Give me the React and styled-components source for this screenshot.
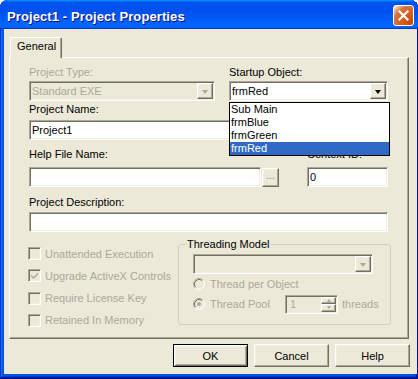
import React from 'react';
import styled, { createGlobalStyle, css } from 'styled-components';

const face = '#ece9d8';
const shadow = '#aca899';
const dkShadow = '#716f64';
const light = '#f1efe2';
const grayText = '#aca899';

const GlobalStyle = createGlobalStyle`
  html, body {
    margin: 0;
    padding: 0;
    background: #ffffff;
  }
  body {
    font-family: "Liberation Sans", Arial, sans-serif;
    font-size: 11px;
    color: #000;
  }
  * {
    box-sizing: border-box;
  }
`;

const sunken = css`
  border: 1px solid;
  border-color: ${shadow} #fff #fff ${shadow};
  box-shadow: inset 1px 1px 0 ${dkShadow}, inset -1px -1px 0 ${light};
`;

const raised = css`
  border: 1px solid;
  border-color: #fff ${dkShadow} ${dkShadow} #fff;
  box-shadow: inset -1px -1px 0 ${shadow}, inset 1px 1px 0 ${light};
`;

const Window = styled.div`
  width: 418px;
  height: 379px;
  display: flex;
  flex-direction: column;
  border-radius: 8px 8px 0 0;
  overflow: hidden;
  background: #0054e3;
  box-shadow: inset -1px -1px #00138c, inset 1px 1px #0831d9,
    inset -2px -2px #001ea0, inset 2px 2px #166aee,
    inset -3px -3px #003bda, inset 3px 3px #0855dd;
`;

const TitleBar = styled.div`
  height: 29px;
  flex: none;
  display: flex;
  align-items: center;
  padding: 0 4px 0 7px;
  background: linear-gradient(180deg, #0997ff 0%, #0053ee 8%, #0050ee 40%, #0066ff 88%, #0066ff 93%, #005bff 95%, #003dd7 96%, #003dd7 100%);
`;

const Title = styled.div`
  flex: 1;
  padding-top: 4px;
  color: #fff;
  font-size: 13px;
  line-height: 15px;
  font-weight: bold;
  letter-spacing: 0.1px;
  text-shadow: 1px 1px #0f1089;
`;

const CloseButton = styled.div`
  width: 21px;
  height: 21px;
  margin-top: 2px;
  border: 1px solid #fff;
  border-radius: 3px;
  display: flex;
  align-items: center;
  justify-content: center;
  background: radial-gradient(circle at 90% 90%, #cc4600 0%, #dc6527 55%, #cd7546 70%, #ffccb2 90%, #fff 100%);
`;

const Frame = styled.div`
  flex: 1;
  display: flex;
  padding: 0 4px 5px 4px;
`;

const Body = styled.div`
  flex: 1;
  display: flex;
  flex-direction: column;
  background: ${face};
  padding: 8px 8px 7px 5px;
`;

const TabStrip = styled.div`
  height: 20px;
  display: flex;
  align-items: flex-end;
  padding-left: 1px;
`;

const Tab = styled.div`
  position: relative;
  z-index: 1;
  width: 52px;
  height: 21px;
  margin-bottom: -1px;
  padding: 2px 0 0 6px;
  line-height: 13px;
  background: ${face};
  border-left: 1px solid #fff;
  border-top: 1px solid #fff;
  border-right: 1px solid ${dkShadow};
  border-top-left-radius: 2px;
  border-top-right-radius: 2px;
  box-shadow: inset -1px 0 0 ${shadow};
`;

const Panel = styled.div`
  height: 282px;
  border: 1px solid;
  border-color: #fff ${dkShadow} ${dkShadow} #fff;
  box-shadow: inset -1px -1px 0 ${shadow};
  padding: 8px 17px 0 19px;
  display: flex;
  flex-direction: column;
`;

const Row = styled.div`
  display: flex;
  align-items: flex-end;
  gap: ${p => p.$gap || 0}px;
  margin-top: ${p => p.$top || 0}px;
`;

const Field = styled.div`
  position: relative;
  display: flex;
  flex-direction: column;
  width: ${p => p.$width}px;
  margin-left: ${p => p.$left || 0}px;
`;

const Label = styled.div`
  height: 13px;
  line-height: 13px;
  white-space: nowrap;
  color: ${p => (p.$disabled ? grayText : '#000')};
  margin-bottom: ${p => p.$gap || 2}px;
`;

const TextBox = styled.div`
  ${sunken};
  height: ${p => p.$height || 20}px;
  width: ${p => (p.$width ? `${p.$width}px` : '100%')};
  background: ${p => (p.$disabled ? face : '#fff')};
  color: ${p => (p.$disabled ? grayText : '#000')};
  padding: 0 0 0 2px;
  display: flex;
  align-items: center;
  white-space: nowrap;
  overflow: hidden;
`;

const ComboBox = styled.div`
  ${sunken};
  height: ${p => p.$height || 20}px;
  width: 100%;
  background: ${p => (p.$disabled ? face : '#fff')};
  color: ${p => (p.$disabled ? grayText : '#000')};
  display: flex;
  align-items: stretch;
  padding: 1px;
`;

const ComboText = styled.div`
  flex: 1;
  padding-left: 1px;
  display: flex;
  align-items: center;
  white-space: nowrap;
`;

const DropButton = styled.div`
  ${raised};
  width: 16px;
  background: ${face};
  display: flex;
  align-items: center;
  justify-content: center;
`;

const Arrow = styled.div`
  width: 0;
  height: 0;
  border-left: 3.5px solid transparent;
  border-right: 3.5px solid transparent;
  border-top: 4px solid ${p => (p.$disabled ? grayText : '#000')};
  margin-top: 1px;
`;

const DropList = styled.div`
  position: absolute;
  z-index: 5;
  top: calc(100% + 1px);
  left: 0;
  width: 161px;
  border: 1px solid #000;
  background: #fff;
`;

const ListItem = styled.div`
  height: 13px;
  line-height: 13px;
  padding-left: 1px;
  background: ${p => (p.$selected ? '#316ac5' : '#fff')};
  color: ${p => (p.$selected ? '#fff' : '#000')};
`;

const SmallButton = styled.div`
  ${raised};
  width: 17px;
  height: 19px;
  margin-left: 1px;
  background: ${face};
  color: #8d8a7e;
  font-size: 11px;
  line-height: 12px;
  display: flex;
  justify-content: center;
  letter-spacing: 0px;
`;

const Lower = styled.div`
  display: flex;
  margin-top: 6px;
`;

const Checks = styled.div`
  width: 149px;
  margin-left: -1px;
  margin-right: 1px;
  padding-top: 9px;
  display: flex;
  flex-direction: column;
  gap: 9.3px;
`;

const CheckRow = styled.div`
  display: flex;
  align-items: center;
  height: 13px;
  gap: 4px;
  color: ${grayText};
  white-space: nowrap;
`;

const CheckBox = styled.div`
  ${sunken};
  width: 13px;
  height: 13px;
  background: ${face};
  display: flex;
  align-items: center;
  justify-content: center;
`;

const Group = styled.fieldset`
  width: 213px;
  height: 87px;
  margin: 0;
  padding: 0;
  border: 1px solid #d0d0bf;
  border-radius: 3px;
  min-width: 0;
`;

const Legend = styled.legend`
  margin-left: 7px;
  padding: 0 1px;
  height: 13px;
  line-height: 13px;
`;

const GroupInner = styled.div`
  padding: 3px 0 0 14px;
  display: flex;
  flex-direction: column;
`;

const RadioRow = styled.div`
  display: flex;
  align-items: center;
  height: 20px;
  color: ${grayText};
  white-space: nowrap;
`;

const RadioText = styled.span`
  margin-left: 5px;
  width: ${p => (p.$width ? `${p.$width}px` : 'auto')};
`;

const Spin = styled.div`
  ${sunken};
  width: 53px;
  height: 19px;
  background: ${face};
  display: flex;
  padding: 1px;
  color: ${grayText};
`;

const SpinText = styled.div`
  flex: 1;
  padding-left: 3px;
  display: flex;
  align-items: center;
`;

const SpinButtons = styled.div`
  width: 15px;
  display: flex;
  flex-direction: column;
`;

const SpinButton = styled.div`
  ${raised};
  flex: 1;
  background: ${face};
  display: flex;
  align-items: center;
  justify-content: center;
`;

const SpinArrow = styled.div`
  width: 0;
  height: 0;
  border-left: 2.5px solid transparent;
  border-right: 2.5px solid transparent;
  ${p => (p.$up
    ? `border-bottom: 3px solid ${grayText};`
    : `border-top: 3px solid ${grayText};`)}
`;

const Suffix = styled.span`
  margin-left: 4px;
`;

const ButtonRow = styled.div`
  display: flex;
  justify-content: flex-end;
  gap: 6px;
  margin-top: 5px;
  margin-right: -1px;
`;

const DialogButton = styled.div`
  width: 75px;
  height: 23px;
  background: ${face};
  display: flex;
  align-items: center;
  justify-content: center;
  ${raised};
  ${p => p.$default && css`
    border: 1px solid #000;
    box-shadow: inset 1px 1px 0 #fff, inset -1px -1px 0 ${dkShadow},
      inset 2px 2px 0 ${light}, inset -2px -2px 0 ${shadow};
  `}
`;

const CloseIcon = () => (
  <svg width="11" height="11" viewBox="0 0 11 11">
    <path d="M1.5 1.5 L9.5 9.5 M9.5 1.5 L1.5 9.5" stroke="#fff" strokeWidth="2.2" strokeLinecap="square" />
  </svg>
);

const CheckMark = () => (
  <svg width="7" height="7" viewBox="0 0 7 7">
    <path d="M0 2.5 L2.5 5 L7 0.5 L7 2.5 L2.5 7 L0 4.5 Z" fill={grayText} />
  </svg>
);

const Radio = ({ checked }) => (
  <svg width="12" height="12" viewBox="0 0 12 12">
    <circle cx="6" cy="6" r="5" fill={face} />
    <path d="M2.11 9.89 A5.5 5.5 0 0 1 9.89 2.11" stroke={shadow} fill="none" />
    <path d="M9.89 2.11 A5.5 5.5 0 0 1 2.11 9.89" stroke="#fff" fill="none" />
    <path d="M2.82 9.18 A4.5 4.5 0 0 1 9.18 2.82" stroke={dkShadow} fill="none" />
    <path d="M9.18 2.82 A4.5 4.5 0 0 1 2.82 9.18" stroke={light} fill="none" />
    {checked && <circle cx="6" cy="6" r="2" fill={grayText} />}
  </svg>
);

const checks = [
  { label: 'Unattended Execution', checked: false },
  { label: 'Upgrade ActiveX Controls', checked: true },
  { label: 'Require License Key', checked: false },
  { label: 'Retained In Memory', checked: false },
];

const startupItems = ['Sub Main', 'frmBlue', 'frmGreen', 'frmRed'];

export default function App() {
  return (
    <>
      <GlobalStyle />
      <Window>
        <TitleBar>
          <Title>Project1 - Project Properties</Title>
          <CloseButton>
            <CloseIcon />
          </CloseButton>
        </TitleBar>
        <Frame>
          <Body>
            <TabStrip>
              <Tab>General</Tab>
            </TabStrip>
            <Panel>
              <Row $gap={14}>
                <Field $width={186}>
                  <Label $disabled>Project Type:</Label>
                  <ComboBox $disabled>
                    <ComboText>Standard EXE</ComboText>
                    <DropButton>
                      <Arrow $disabled />
                    </DropButton>
                  </ComboBox>
                </Field>
                <Field $width={159}>
                  <Label>Startup Object:</Label>
                  <ComboBox>
                    <ComboText>frmRed</ComboText>
                    <DropButton>
                      <Arrow />
                    </DropButton>
                  </ComboBox>
                  <DropList>
                    {startupItems.map(item => (
                      <ListItem key={item} $selected={item === 'frmRed'}>
                        {item}
                      </ListItem>
                    ))}
                  </DropList>
                </Field>
              </Row>

              <Row $top={2}>
                <Field $width={260}>
                  <Label $gap={4}>Project Name:</Label>
                  <TextBox>Project1</TextBox>
                </Field>
              </Row>

              <Row $top={8}>
                <Field $width={232}>
                  <Label $gap={6}>Help File Name:</Label>
                  <TextBox />
                </Field>
                <SmallButton>...</SmallButton>
                <Field $width={81} $left={28}>
                  <Label $gap={6}>Context ID:</Label>
                  <TextBox>0</TextBox>
                </Field>
              </Row>

              <Row $top={9}>
                <Field $width={359}>
                  <Label $gap={3}>Project Description:</Label>
                  <TextBox />
                </Field>
              </Row>

              <Lower>
                <Checks>
                  {checks.map(c => (
                    <CheckRow key={c.label}>
                      <CheckBox>{c.checked && <CheckMark />}</CheckBox>
                      {c.label}
                    </CheckRow>
                  ))}
                </Checks>
                <Group>
                  <Legend>Threading Model</Legend>
                  <GroupInner>
                    <Field $width={180}>
                      <ComboBox $disabled>
                        <ComboText />
                        <DropButton>
                          <Arrow $disabled />
                        </DropButton>
                      </ComboBox>
                    </Field>
                    <RadioRow>
                      <Radio />
                      <RadioText>Thread per Object</RadioText>
                    </RadioRow>
                    <RadioRow>
                      <Radio checked />
                      <RadioText $width={75}>Thread Pool</RadioText>
                      <Spin>
                        <SpinText>1</SpinText>
                        <SpinButtons>
                          <SpinButton>
                            <SpinArrow $up />
                          </SpinButton>
                          <SpinButton>
                            <SpinArrow />
                          </SpinButton>
                        </SpinButtons>
                      </Spin>
                      <Suffix>threads</Suffix>
                    </RadioRow>
                  </GroupInner>
                </Group>
              </Lower>
            </Panel>
            <ButtonRow>
              <DialogButton $default>OK</DialogButton>
              <DialogButton>Cancel</DialogButton>
              <DialogButton>Help</DialogButton>
            </ButtonRow>
          </Body>
        </Frame>
      </Window>
    </>
  );
}
